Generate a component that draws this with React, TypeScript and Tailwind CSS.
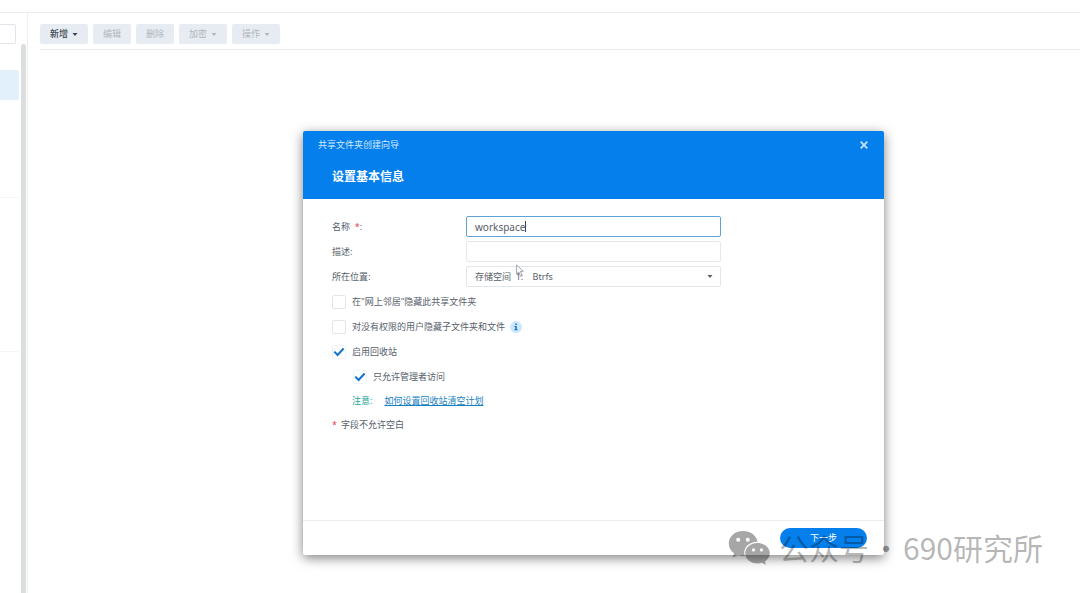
import { useState } from "react";
import type { ReactNode } from "react";

function Caret({ className = "" }: { className?: string }) {
  return (
    <svg viewBox="0 0 6 3" className={`h-[3px] w-[6px] ${className}`} fill="currentColor" aria-hidden="true">
      <path d="M.5 0h5L3 3z" />
    </svg>
  );
}

function ToolButton({ label, menu, disabled }: { label: string; menu?: boolean; disabled?: boolean }) {
  return (
    <button
      type="button"
      disabled={disabled}
      className="flex h-5 items-center gap-1 rounded-xs bg-[#e7ecf3] px-[10px] text-[#3c4650] disabled:text-[#b0b6bd]"
    >
      <span className={disabled ? "" : "font-medium"}>{label}</span>
      {menu && <Caret />}
    </button>
  );
}

function Check({
  label,
  initial = false,
  className = "",
  children,
}: {
  label: string;
  initial?: boolean;
  className?: string;
  children?: ReactNode;
}) {
  const [on, setOn] = useState(initial);
  return (
    <div className={`flex h-[21px] items-center gap-[5px] ${className}`}>
      <label className="flex items-center gap-[6px]">
        <span className="grid size-[14px] place-items-center">
          <input
            type="checkbox"
            checked={on}
            onChange={(e) => setOn(e.target.checked)}
            className="col-start-1 row-start-1 size-[14px] appearance-none rounded-xs border border-[#e1e6eb] bg-white checked:border-[#edf3f9]"
          />
          {on && (
            <svg viewBox="0 0 12 10" className="pointer-events-none col-start-1 row-start-1 h-[10px] w-3" fill="none" stroke="#1273cf" strokeWidth="2" aria-hidden="true">
              <path d="M1.3 4.6 4.6 8l6-6.5" />
            </svg>
          )}
        </span>
        {label}
      </label>
      {children}
    </div>
  );
}

function Wizard() {
  const [name, setName] = useState("workspace");
  return (
    <section
      role="dialog"
      aria-labelledby="wizard-title"
      className="absolute top-[131px] left-[303px] flex min-h-[424px] w-[581px] flex-col rounded-xs bg-white shadow-[0_3px_12px_rgba(0,0,0,0.5)]"
    >
      <header className="h-[68px] rounded-t-xs bg-[#057feb] text-white">
        <div className="flex h-7 items-center justify-between px-[15px]">
          <h1 id="wizard-title" className="text-[9px] text-[#d3e9ff]">共享文件夹创建向导</h1>
          <button type="button" aria-label="关闭" className="grid size-[10px] place-items-center text-[#c4e2ff]">
            <svg viewBox="0 0 8 8" className="size-2" stroke="currentColor" strokeWidth="1.8" aria-hidden="true">
              <path d="M.7.7l6.6 6.6M7.3.7.7 7.3" />
            </svg>
          </button>
        </div>
        <h2 className="pt-2 pl-[29px] text-[12px] leading-5 font-bold">设置基本信息</h2>
      </header>

      <form className="flex flex-1 flex-col gap-1 px-[29px] pt-[17px]" onSubmit={(e) => e.preventDefault()}>
        <div className="flex h-[21px] items-center">
          <label htmlFor="name" className="w-[134px]">
            名称&nbsp; <span className="text-[#e0424f]">*</span>:
          </label>
          <div className="relative">
            <input
              id="name"
              value={name}
              onChange={(e) => setName(e.target.value)}
              className="block h-[21px] w-[255px] rounded-xs border border-[#5fa3d6] bg-white px-2 text-[10px] outline-none"
            />
            <span className="absolute top-[5px] left-[59px] h-[11px] w-px bg-[#3c4650]" />
          </div>
        </div>
        <div className="flex h-[21px] items-center">
          <label htmlFor="desc" className="w-[134px]">描述:</label>
          <input id="desc" className="h-[21px] w-[255px] rounded-xs border border-[#e4e9ed] bg-white px-2 outline-none" />
        </div>
        <div className="flex h-[21px] items-center">
          <label htmlFor="place" className="w-[134px]">所在位置:</label>
          <div className="relative">
            <select id="place" className="block h-[21px] w-[255px] appearance-none rounded-xs border border-[#e1e6eb] bg-white px-2 outline-none">
              <option>{"存储空间\u00a0 1:\u00a0\u00a0\u00a0 Btrfs"}</option>
            </select>
            <Caret className="pointer-events-none absolute top-[9px] right-2" />
            <svg viewBox="0 0 8 14" className="absolute -top-[2px] left-[50px] h-[14px] w-2" fill="#fff" stroke="#8a9098" strokeWidth=".8" aria-hidden="true">
              <path d="M.6.8v9.1L2.8 8l1.700 4.300 1.600-.7L4.400 7.400h2.800z" />
            </svg>
          </div>
        </div>
        <Check label={'在"网上邻居"隐藏此共享文件夹'} />
        <Check label="对没有权限的用户隐藏子文件夹和文件">
          <span role="img" aria-label="信息" className="grid size-3 place-items-center rounded-full bg-[#cfe7fc]">
            <svg viewBox="0 0 12 12" className="size-3" fill="#1273cf" aria-hidden="true">
              <path d="M5.200 2.600h1.600v1.500H5.200zM4.400 5h2.400v3.200h.8v1.100H4.400V8.200h.9V6.100h-.9z" />
            </svg>
          </span>
        </Check>
        <Check label="启用回收站" initial />
        <Check label="只允许管理者访问" initial className="pl-[21px]" />
        <p className="flex h-5 items-center gap-3 pl-5">
          <span className="text-[#1ea796]">注意:</span>
          <a href="#plan" className="text-[#177fc4] underline underline-offset-1">如何设置回收站清空计划</a>
        </p>
        <p className="flex h-5 items-center gap-1">
          <span className="text-[#e0424f]">*</span>
          字段不允许空白
        </p>
      </form>

      <footer className="flex h-[35px] justify-end border-t border-[#e9edf0] px-[17px] pt-[7px]">
        <button type="button" className="h-5 w-[87px] rounded-full bg-[#057feb] text-white">下一步</button>
      </footer>
    </section>
  );
}

function Watermark() {
  return (
    <div className="pointer-events-none absolute top-[527px] left-[728px] flex items-start font-['Noto_Sans_CJK_SC',sans-serif] text-[30px] leading-10 whitespace-nowrap text-black/30">
      <svg viewBox="0 0 42 34" className="mt-1 mr-[9px] h-[34px] w-[42px] fill-black/35" aria-hidden="true">
        <path
          fillRule="evenodd"
          d="M15 0C6.700 0 .8 5.500.8 12.500c0 4 2 7.500 5.200 9.800L4.700 26.500l5-2.600c2 .7 4.400 1.100 7.100 1-2.400-7.400 3.500-14.200 12.800-14.200C28.600 4.700 22.700 0 15 0zM10.200 6.700a2 2 0 1 1 0 4 2 2 0 0 1 0-4zm9.600 0a2 2 0 1 1 0 4 2 2 0 0 1 0-4z"
        />
        <path
          fillRule="evenodd"
          d="M29.500 12C22.600 12 17.200 16.600 17.200 22.300S22.600 32.500 29.500 32.500c1.600 0 3.100-.2 4.500-.7l4 2.200-1.100-3.600c3-1.900 4.900-4.800 4.900-8.100C41.800 16.600 36.400 12 29.500 12zM25.500 17.300a1.600 1.600 0 1 1 0 3.200 1.600 1.600 0 0 1 0-3.200zm8 0a1.600 1.600 0 1 1 0 3.200 1.600 1.600 0 0 1 0-3.200z"
        />
      </svg>
      <span>公众号</span>
      <span className="flex w-[34px] justify-center text-black/40">·</span>
      <span>690研究所</span>
    </div>
  );
}

export default function App() {
  return (
    <div className="relative flex min-h-screen flex-col overflow-hidden bg-white font-['Noto_Sans','Noto_Sans_CJK_SC',sans-serif] text-[9px] text-[#56606a]">
      <div className="h-[13px] border-b border-[#eceff1]" />
      <div className="flex flex-1">
        <aside className="flex w-7 shrink-0 justify-between border-r border-[#eceff1]">
          <div className="w-[19px] pt-[11px]">
            <input aria-label="搜索" className="block h-5 w-4 rounded-r-xs border border-l-0 border-[#e1e5e9]" />
            <div className="mt-[26px] h-[30px] rounded-r-xs bg-[#e2f0fb]" />
            <div className="h-[98px] border-b border-[#f3f5f6]" />
            <div className="h-[154px] border-b border-[#f3f5f6]" />
          </div>
          <div className="mt-[31px] mr-px w-[5px] rounded-t-full bg-[#dcdddd]" />
        </aside>
        <main className="flex-1 pl-3">
          <nav className="flex gap-[5px] border-b border-[#e6eaed] pt-[11px] pb-[5px]">
            <ToolButton label="新增" menu />
            <ToolButton label="编辑" disabled />
            <ToolButton label="删除" disabled />
            <ToolButton label="加密" menu disabled />
            <ToolButton label="操作" menu disabled />
          </nav>
        </main>
      </div>
      <Wizard />
      <Watermark />
    </div>
  );
}
